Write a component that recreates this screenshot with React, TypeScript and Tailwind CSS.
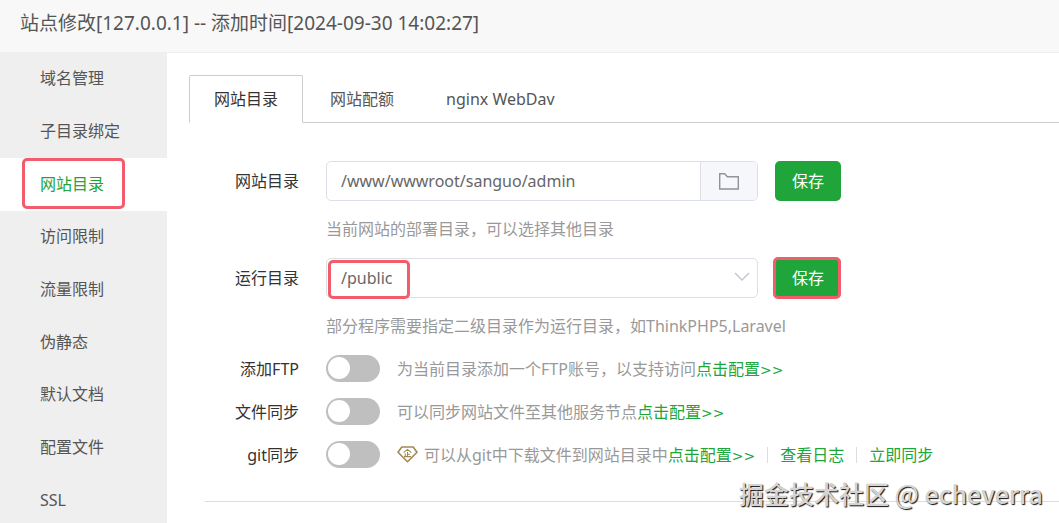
import React, { useState } from 'react';

const menuItems = ['域名管理', '子目录绑定', '网站目录', '访问限制', '流量限制', '伪静态', '默认文档', '配置文件', 'SSL'];
const tabs = ['网站目录', '网站配额', 'nginx WebDav'];

function FolderIcon() {
    return (
        <svg className="w-5 h-[17px]" viewBox="0 0 20 17" fill="none" stroke="#909399" strokeWidth="1.4">
            <path d="M.7 .8h5l2.6 2.9h11V16H.7z" />
        </svg>
    );
}

function EnterpriseIcon() {
    return (
        <svg className="w-[21px] h-[17px] shrink-0" viewBox="0 0 21 17" fill="none" stroke="#a08a50">
            <path d="M4.8 1h11.4L20 6.2 10.5 15.8 1 6.2z" strokeWidth="1.6" strokeLinejoin="round" />
            <path d="M6.6 6.6 10.5 3.4l3.9 3.2M10.5 6v4.5M10.5 8.2h2.5M8.3 7.6v3M7 10.6h7" strokeWidth="1.1" />
        </svg>
    );
}

function SaveButton() {
    return (
        <button type="button" className="w-[66px] h-10 shrink-0 rounded-[5px] bg-[#20a53a] text-white">
            保存
        </button>
    );
}

function ConfigLink() {
    return (
        <a href="#config" className="text-[#20a53a]">
            点击配置<span className="font-['DejaVu_Sans',sans-serif] text-sm">&gt;&gt;</span>
        </a>
    );
}

interface SwitchRowProps {
    id: string;
    label: string;
    children: React.ReactNode;
}

function SwitchRow({ id, label, children }: SwitchRowProps) {
    return (
        <div className="flex items-center h-[27px]">
            <label htmlFor={id} className="w-[132px] mr-[27px] shrink-0 text-right text-[#333]">{label}</label>
            <input
                id={id}
                type="checkbox"
                role="switch"
                className="appearance-none w-[54px] h-[27px] mr-[17px] shrink-0 rounded-full bg-[#bfbfbf] checked:bg-[#20a53a] before:block before:w-[22px] before:h-[22px] before:mt-0.5 before:ml-0.5 before:rounded-full before:bg-white checked:before:ml-[29px]"
            />
            <div className="flex items-center text-[#999] whitespace-nowrap">{children}</div>
        </div>
    );
}

export default function App() {
    const [activeMenu, setActiveMenu] = useState('网站目录');
    const [activeTab, setActiveTab] = useState('网站目录');
    const [path, setPath] = useState('/www/wwwroot/sanguo/admin');

    return (
        <div className="relative min-h-screen flex flex-col overflow-hidden bg-white text-base leading-6 text-[#555] font-['Noto_Sans','Noto_Sans_CJK_SC',sans-serif]">
            <header className="h-[53px] px-5 pt-[9px] border-b border-[#eee] bg-[#f8f8f8]">
                <h1 className="text-[19px] leading-7">站点修改[127.0.0.1] -- 添加时间[2024-09-30 14:02:27]</h1>
            </header>

            <div className="flex flex-1">
                <nav className="w-[167px] h-[470px] min-h-full shrink-0 overflow-hidden bg-[#efefef]">
                    <ul className="flex flex-col h-[474px]">
                        {menuItems.map((item) => (
                            <li key={item} className="relative flex-1">
                                <button
                                    type="button"
                                    onClick={() => setActiveMenu(item)}
                                    className={`w-full h-full pl-10 pb-0.5 text-left ${item === activeMenu ? 'bg-white text-[#20a53a]' : ''}`}
                                >
                                    {item}
                                </button>
                                {item === '网站目录' && (
                                    <span className="absolute left-[22px] top-0 bottom-0.5 w-[103px] rounded-[5px] border-3 border-[#f25c6b] pointer-events-none" />
                                )}
                            </li>
                        ))}
                    </ul>
                </nav>

                <main className="flex-1 min-w-0 pt-[22px]">
                    {/* Tabs */}
                    <div role="tablist" className="ml-[22px] flex gap-0.5 border-b border-[#ccc]">
                        {tabs.map((tab) => (
                            <button
                                key={tab}
                                type="button"
                                role="tab"
                                aria-selected={tab === activeTab}
                                onClick={() => setActiveTab(tab)}
                                className={`h-12 px-6 border -mb-px ${tab === activeTab ? 'rounded-t-xs border-[#ccc] border-b-white bg-white text-[#333]' : 'border-transparent'}`}
                            >
                                {tab}
                            </button>
                        ))}
                    </div>

                    <form className="pt-[38px]" onSubmit={(e) => e.preventDefault()}>
                        {/* Site directory */}
                        <div className="flex items-center">
                            <label htmlFor="site-path" className="w-[132px] mr-[27px] shrink-0 text-right text-[#333]">网站目录</label>
                            <div className="flex w-full max-w-[432px] h-10 mr-[17px] rounded-[5px] border border-[#dcdfe6] overflow-hidden">
                                <input
                                    id="site-path"
                                    value={path}
                                    onChange={(e) => setPath(e.target.value)}
                                    className="flex-1 min-w-0 px-3.5 text-[#666] outline-none"
                                />
                                <button type="button" aria-label="选择目录" className="w-[57px] flex items-center justify-center border-l border-[#dcdfe6] bg-[#f5f7fa]">
                                    <FolderIcon />
                                </button>
                            </div>
                            <SaveButton />
                        </div>
                        <p className="ml-[159px] mt-4 mb-[17px] text-[#999]">当前网站的部署目录，可以选择其他目录</p>

                        {/* Run directory */}
                        <div className="flex items-center">
                            <label htmlFor="run-path" className="w-[132px] mr-[27px] shrink-0 text-right text-[#333]">运行目录</label>
                            <div className="relative w-full max-w-[432px] mr-[17px]">
                                <select id="run-path" className="appearance-none w-full h-10 px-3.5 rounded-[5px] border border-[#dcdfe6] bg-white text-[#666] outline-none">
                                    <option>/public</option>
                                </select>
                                <svg className="absolute right-2 top-[14px] w-4 h-[10px] pointer-events-none" viewBox="0 0 16 10" fill="none" stroke="#c0c4cc" strokeWidth="1.4">
                                    <path d="m1 1 7 7 7-7" />
                                </svg>
                                <span className="absolute left-0.5 top-0.5 w-[82px] h-[39px] rounded-[5px] border-3 border-[#f25c6b] pointer-events-none" />
                            </div>
                            <div className="relative shrink-0">
                                <SaveButton />
                                <span className="absolute -left-0.5 right-0 -inset-y-px rounded-[5px] border-3 border-[#f25c6b] pointer-events-none" />
                            </div>
                        </div>
                        <p className="ml-[159px] mt-4 mb-[17px] text-[#999]">部分程序需要指定二级目录作为运行目录，如ThinkPHP5,Laravel</p>

                        <div className="flex flex-col gap-4">
                            <SwitchRow id="ftp" label="添加FTP">
                                为当前目录添加一个FTP账号，以支持访问<ConfigLink />
                            </SwitchRow>
                            <SwitchRow id="file-sync" label="文件同步">
                                可以同步网站文件至其他服务节点<ConfigLink />
                            </SwitchRow>
                            <SwitchRow id="git-sync" label="git同步">
                                <span className="mr-1.5"><EnterpriseIcon /></span>
                                可以从git中下载文件到网站目录中<ConfigLink />
                                <span className="w-px h-4 mx-3 bg-[#ddd]" />
                                <a href="#log" className="text-[#20a53a]">查看日志</a>
                                <span className="w-px h-4 mx-3 bg-[#ddd]" />
                                <a href="#sync" className="text-[#20a53a]">立即同步</a>
                            </SwitchRow>
                        </div>
                    </form>
                    <hr className="ml-[38px] mt-[33px] border-[#ddd]" />
                </main>
            </div>

            <div className="absolute right-4 bottom-3 text-[25px] leading-9 font-medium text-[#d4d4d4] whitespace-nowrap pointer-events-none font-['Noto_Sans_CJK_SC',sans-serif] [text-shadow:1px_1px_1px_#111]">
                掘金技术社区 @ echeverra
            </div>
        </div>
    );
}
